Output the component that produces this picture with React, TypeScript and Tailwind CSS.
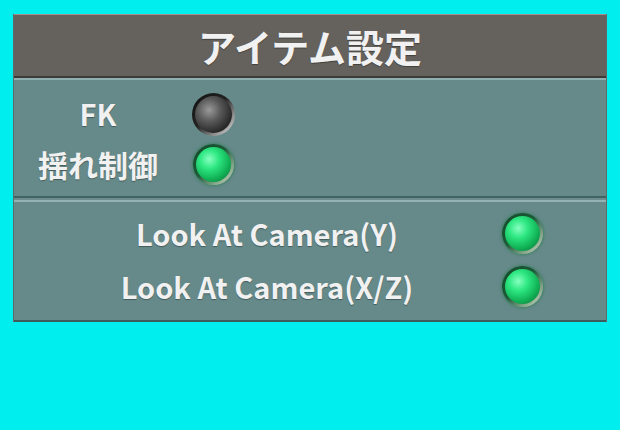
const FONT = '"Noto Sans CJK JP", "Noto Sans", sans-serif';

type LampProps = { on: boolean };

function Lamp({ on }: LampProps) {
  return (
    <div className="w-[44px] h-[44px] flex items-center justify-center shrink-0">
      <div
        className={`rounded-full p-[3px] ${
          on
            ? 'w-[41px] h-[41px] bg-[linear-gradient(135deg,#124a2a_0%,#1c5a38_45%,#b9cdb2_90%)] shadow-[0_0_3px_1px_rgba(20,120,60,0.5)]'
            : 'w-[43px] h-[43px] bg-[linear-gradient(135deg,#111_0%,#222_45%,#c9c9c9_90%)]'
        }`}
      >
        <div
          className={`w-full h-full rounded-full ${
            on
              ? 'bg-[radial-gradient(circle_at_38%_35%,#86ffc0_0%,#2ee882_30%,#12b458_62%,#076a30_100%)]'
              : 'bg-[radial-gradient(circle_at_38%_38%,#9a9a9a_0%,#5a5a5a_35%,#2a2a2a_70%,#141414_100%)]'
          }`}
        />
      </div>
    </div>
  );
}

const txt = 'text-[#f1f1f1] font-bold [text-shadow:0_1px_1px_rgba(0,0,0,0.35)]';

export default function App() {
  return (
    <div className="w-[620px] h-[430px] bg-[#00eeee] pt-[14px] px-[13px]" style={{ fontFamily: FONT }}>
      <div className="w-[594px] flex flex-col border-x border-[#5f6a68]">
        {/* Header */}
        <div className="h-[64px] bg-[#65625e] border-t border-[#a88e8b] border-b-2 border-b-[#3d3a37] flex items-center justify-center">
          <span className={`text-[38px] leading-none ${txt}`}>アイテム設定</span>
        </div>

        {/* Section 1 */}
        <div className="h-[120px] bg-[#668a8a] border-t-2 border-[#8eb0b0] border-b-2 border-b-[#3f6464] pt-[9px] flex flex-col">
          <div className="h-[50px] flex items-center">
            <div className={`w-[168px] text-center text-[29px] ${txt}`}>FK</div>
            <div className="ml-[9px]"><Lamp on={false} /></div>
          </div>
          <div className="h-[50px] flex items-center">
            <div className={`w-[168px] text-center text-[30px] ${txt}`}>揺れ制御</div>
            <div className="ml-[9px]"><Lamp on /></div>
          </div>
        </div>

        <div className="h-[2px] bg-[#6f8c8c]" />

        {/* Section 2 */}
        <div className="h-[122px] bg-[#668a8a] border-t-2 border-[#93b2b2] border-b-2 border-b-[#3f5c5c] pt-[5px] flex flex-col">
          <div className="h-[53px] flex items-center">
            <div className={`ml-[20px] w-[466px] text-center text-[29px] ${txt}`}>Look At Camera(Y)</div>
            <Lamp on />
          </div>
          <div className="h-[53px] flex items-center">
            <div className={`ml-[20px] w-[466px] text-center text-[29px] ${txt}`}>Look At Camera(X/Z)</div>
            <Lamp on />
          </div>
        </div>
      </div>
    </div>
  );
}
